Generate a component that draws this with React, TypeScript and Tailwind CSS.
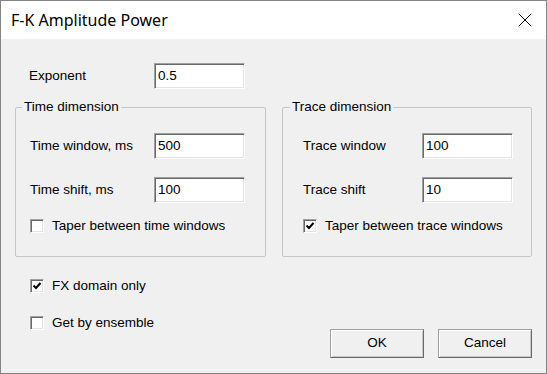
import { X } from "lucide-react";

const font = { fontFamily: '"Liberation Sans", Arial, sans-serif' };

function Field({ value }: { value: string }) {
  return (
    <div className="w-[91px] h-[26px] bg-white border border-t-[#a0a0a0] border-l-[#a0a0a0] border-r-white border-b-white shadow-[inset_1px_1px_0_#696969,inset_-1px_-1px_0_#e3e3e3] flex items-center pl-[3px] text-[13.5px] text-black">
      {value}
    </div>
  );
}

function Check({ checked, label }: { checked?: boolean; label: string }) {
  return (
    <div className="flex items-center h-[16px]">
      <div className="w-[14px] h-[14px] bg-white border border-t-[#a0a0a0] border-l-[#a0a0a0] border-r-white border-b-white shadow-[inset_1px_1px_0_#696969,inset_-1px_-1px_0_#e3e3e3] flex items-center justify-center">
        {checked && (
          <svg width="10" height="10" viewBox="0 0 10 10">
            <path d="M1.5 4.5 L4 7 L8.5 2" fill="none" stroke="#000" strokeWidth="2" />
          </svg>
        )}
      </div>
      <span className="ml-[8px] text-[13.5px] text-black">{label}</span>
    </div>
  );
}

function Row({ label, value, labelW }: { label: string; value: string; labelW: string }) {
  return (
    <div className="flex items-center">
      <span className={`${labelW} text-[13.5px] text-black`}>{label}</span>
      <Field value={value} />
    </div>
  );
}

function Btn({ children }: { children: string }) {
  return (
    <div className="w-[94px] h-[29px] bg-[#f0f0f0] border border-[#a0a0a0] border-r-[#696969] border-b-[#696969] shadow-[inset_1px_1px_0_#fff,inset_-1px_-1px_0_#c8c8c8] flex items-center justify-center text-[13.5px] text-black">
      {children}
    </div>
  );
}

export default function App() {
  return (
    <div className="w-[547px] h-[374px] border border-[#858585] bg-[#f0f0f0] flex flex-col" style={font}>
      {/* title bar */}
      <div className="h-[38px] bg-white flex items-center justify-between pl-[10px] pr-[9px] shrink-0">
        <span className="text-[16px] text-black" style={{ fontFamily: '"Noto Sans", "Open Sans", sans-serif' }}>
          F-K Amplitude Power
        </span>
        <X className="w-[24px] h-[24px] text-black" strokeWidth={1} />
      </div>

      {/* body */}
      <div className="flex flex-col px-[14px] pt-[24px]">
        <div className="flex items-center pl-[14px]">
          <span className="w-[125px] text-[13.5px] text-black">Exponent</span>
          <Field value="0.5" />
        </div>

        <div className="flex gap-[16px] mt-[10px]">
          <fieldset className="w-[251px] border border-[#c5c5c5] rounded-[2px] pl-[14px] pt-[18px] pb-[22px]">
            <legend className="-ml-[8px] px-[2px] text-[13.5px] leading-[16px] text-black">Time dimension</legend>
            <div className="flex flex-col gap-[18px]">
              <Row label="Time window, ms" value="500" labelW="w-[124px]" />
              <Row label="Time shift, ms" value="100" labelW="w-[124px]" />
            </div>
            <div className="mt-[15px]">
              <Check label="Taper between time windows" />
            </div>
          </fieldset>

          <fieldset className="w-[250px] border border-[#c5c5c5] rounded-[2px] pl-[20px] pt-[18px] pb-[22px]">
            <legend className="-ml-[13px] px-[2px] text-[13.5px] leading-[16px] text-black">Trace dimension</legend>
            <div className="flex flex-col gap-[18px]">
              <Row label="Trace window" value="100" labelW="w-[119px]" />
              <Row label="Trace shift" value="10" labelW="w-[119px]" />
            </div>
            <div className="mt-[15px]">
              <Check checked label="Taper between trace windows" />
            </div>
          </fieldset>
        </div>

        <div className="flex justify-between">
          <div className="flex flex-col gap-[21px] pt-[21px] pl-[15px]">
            <Check checked label="FX domain only" />
            <Check label="Get by ensemble" />
          </div>
          <div className="flex gap-[14px] pt-[72px]">
            <Btn>OK</Btn>
            <Btn>Cancel</Btn>
          </div>
        </div>
      </div>
    </div>
  );
}
